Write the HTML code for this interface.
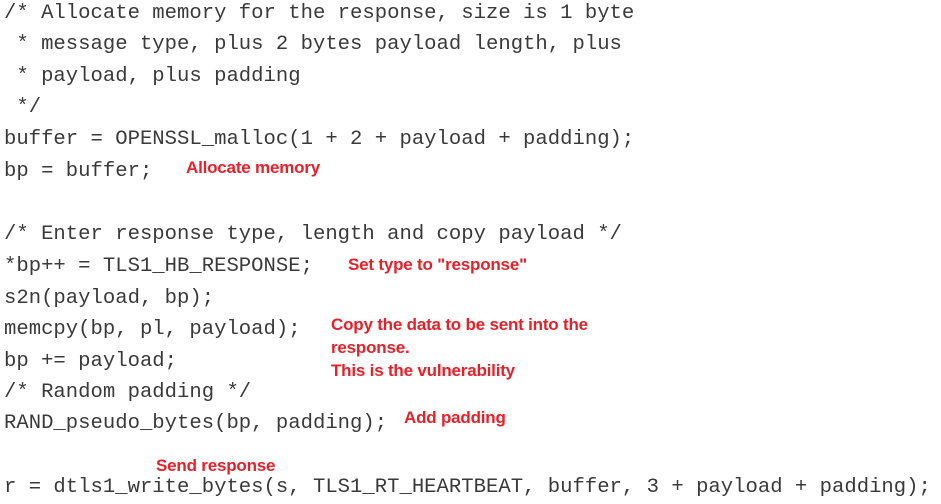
<!DOCTYPE html>
<html><head><style>
body{margin:0;width:941px;height:502px;background:#fff;position:relative;overflow:hidden}
.c{position:absolute;left:4px;font-family:"Liberation Mono",monospace;font-size:20.6px;line-height:32px;height:32px;color:#3a3a3a;white-space:pre}
.a{position:absolute;font-family:"Liberation Sans",sans-serif;font-weight:bold;font-size:17px;line-height:20px;color:#e8202a;white-space:pre;letter-spacing:-0.2px}
</style></head><body>
<div class="c" style="top:-2px">/* Allocate memory for the response, size is 1 byte</div>
<div class="c" style="top:29px"> * message type, plus 2 bytes payload length, plus</div>
<div class="c" style="top:61px"> * payload, plus padding</div>
<div class="c" style="top:92px"> */</div>
<div class="c" style="top:124px">buffer = OPENSSL_malloc(1 + 2 + payload + padding);</div>
<div class="c" style="top:156px">bp = buffer;</div>
<div class="c" style="top:219px">/* Enter response type, length and copy payload */</div>
<div class="c" style="top:251px">*bp++ = TLS1_HB_RESPONSE;</div>
<div class="c" style="top:283px">s2n(payload, bp);</div>
<div class="c" style="top:314px">memcpy(bp, pl, payload);</div>
<div class="c" style="top:346px">bp += payload;</div>
<div class="c" style="top:377px">/* Random padding */</div>
<div class="c" style="top:408px">RAND_pseudo_bytes(bp, padding);</div>
<div class="c" style="top:472px">r = dtls1_write_bytes(s, TLS1_RT_HEARTBEAT, buffer, 3 + payload + padding);</div>
<div class="a" style="left:186px;top:158px">Allocate memory</div>
<div class="a" style="left:348px;top:255px">Set type to "response"</div>
<div class="a" style="left:331px;top:315px">Copy the data to be sent into the</div>
<div class="a" style="left:331px;top:338px">response.</div>
<div class="a" style="left:331px;top:361px">This is the vulnerability</div>
<div class="a" style="left:404px;top:408px">Add padding</div>
<div class="a" style="left:156px;top:456px">Send response</div>
</body></html>
